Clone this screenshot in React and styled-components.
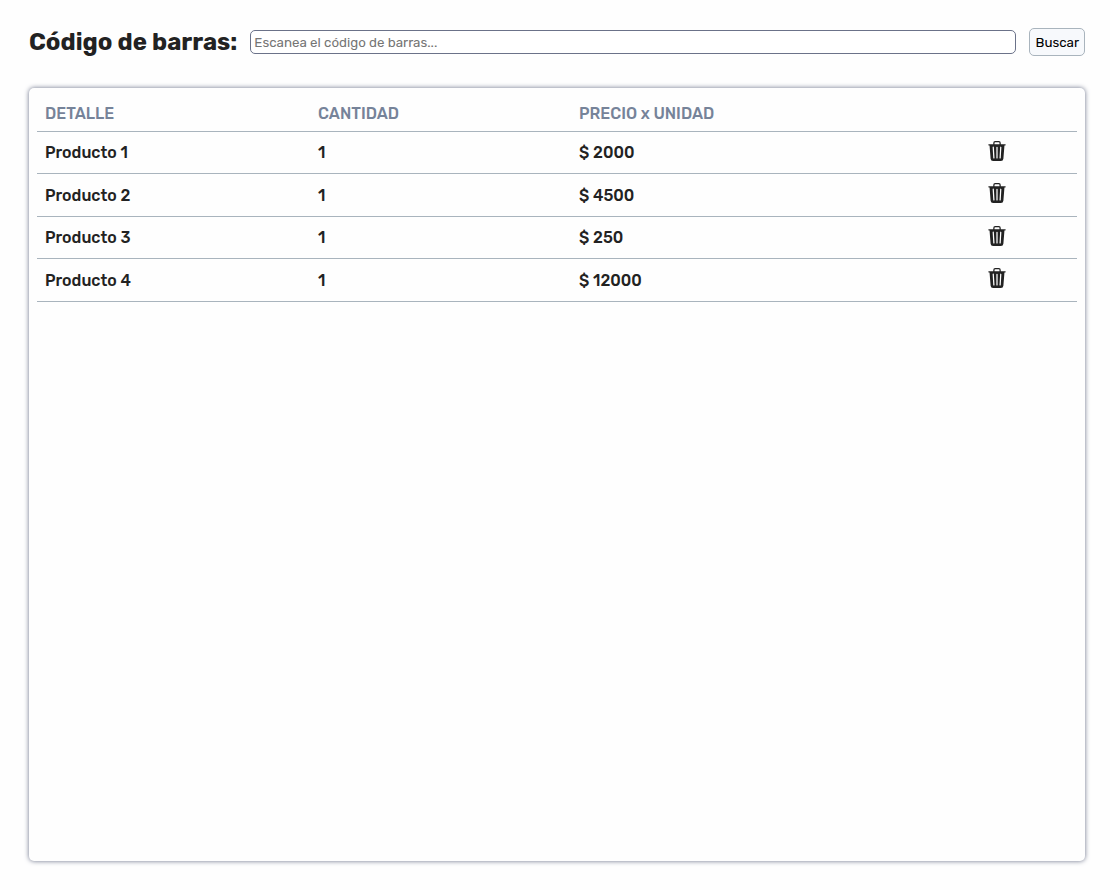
import React, { useState } from "react";
import styled, { createGlobalStyle } from "styled-components";
import { BsTrash3Fill } from "react-icons/bs";

const GlobalStyle = createGlobalStyle`
  *, *::before, *::after { box-sizing: border-box; }
  body {
    margin: 0;
    background: #fefefe;
    color: #222;
    font-family: Rubik, Roboto, "Liberation Sans", sans-serif;
    font-size: 16px;
  }
`;

const Page = styled.main`
  display: flex;
  flex-direction: column;
  gap: 32px;
  min-height: 100vh;
  padding: 28px 25px 29px 29px;
`;

const SearchBar = styled.form`
  display: flex;
  align-items: center;
  gap: 13px;
`;

const SearchLabel = styled.label`
  font-size: 24px;
  line-height: 28px;
  font-weight: 700;
`;

const SearchInput = styled.input`
  flex: 1;
  min-width: 0;
  height: 24px;
  padding: 0 3px;
  border: 1px solid #6b7289;
  border-radius: 5px;
  background: #fff;
  color: inherit;
  font-family: inherit;
  &::placeholder { color: #757575; }
`;

const SearchButton = styled.button`
  height: 28px;
  padding: 0 5px;
  border: 1px solid #a9b4bd;
  border-radius: 5px;
  background: #f7f9fc;
  color: #000;
  font-family: inherit;
  cursor: pointer;
`;

const Panel = styled.section`
  flex: 1;
  padding: 8px;
  border-radius: 5px;
  background: #fefefe;
  box-shadow: 0 0 5px #6b7289;
`;

const ProductTable = styled.table`
  width: 100%;
  table-layout: fixed;
  border-collapse: separate;
  border-spacing: 0;
`;

const Column = styled.col`
  width: ${(p) => p.$width};
`;

const HeadCell = styled.th`
  height: 36px;
  padding: 0 8px;
  border-bottom: 1px solid #a9b4bd;
  color: #768399;
  font-weight: 500;
  text-align: left;
`;

const Row = styled.tr`
  height: 42px;
  &:nth-child(even) { height: 43px; }
`;

const Cell = styled.td`
  padding: 0 8px;
  border-bottom: 1px solid #a9b4bd;
  font-weight: 500;
  text-align: ${(p) => p.$align || "left"};
`;

const DeleteButton = styled.button`
  display: inline-flex;
  padding: 0 0 4px;
  border: 0;
  background: none;
  color: #222;
  font-size: 20px;
  vertical-align: middle;
  cursor: pointer;
`;

const initialProducts = [
  { id: 1, name: "Producto 1", quantity: 1, price: 2000 },
  { id: 2, name: "Producto 2", quantity: 1, price: 4500 },
  { id: 3, name: "Producto 3", quantity: 1, price: 250 },
  { id: 4, name: "Producto 4", quantity: 1, price: 12000 },
];

export default function App() {
  const [products, setProducts] = useState(initialProducts);
  const remove = (id) => setProducts((list) => list.filter((p) => p.id !== id));

  return (
    <>
      <GlobalStyle />
      <Page>
        <SearchBar onSubmit={(e) => e.preventDefault()}>
          <SearchLabel htmlFor="barcode">Código de barras:</SearchLabel>
          <SearchInput id="barcode" type="text" placeholder="Escanea el código de barras..." />
          <SearchButton type="submit">Buscar</SearchButton>
        </SearchBar>
        <Panel>
          <ProductTable>
            <colgroup>
              <Column $width="26.25%" />
              <Column $width="25.1%" />
              <Column $width="33.25%" />
              <Column $width="15.4%" />
            </colgroup>
            <thead>
              <tr>
                <HeadCell scope="col">DETALLE</HeadCell>
                <HeadCell scope="col">CANTIDAD</HeadCell>
                <HeadCell scope="col">PRECIO x UNIDAD</HeadCell>
                <HeadCell as="td" />
              </tr>
            </thead>
            <tbody>
              {products.map((p) => (
                <Row key={p.id}>
                  <Cell>{p.name}</Cell>
                  <Cell>{p.quantity}</Cell>
                  <Cell>$ {p.price}</Cell>
                  <Cell $align="center">
                    <DeleteButton type="button" aria-label={`Eliminar ${p.name}`} onClick={() => remove(p.id)}>
                      <BsTrash3Fill />
                    </DeleteButton>
                  </Cell>
                </Row>
              ))}
            </tbody>
          </ProductTable>
        </Panel>
      </Page>
    </>
  );
}
